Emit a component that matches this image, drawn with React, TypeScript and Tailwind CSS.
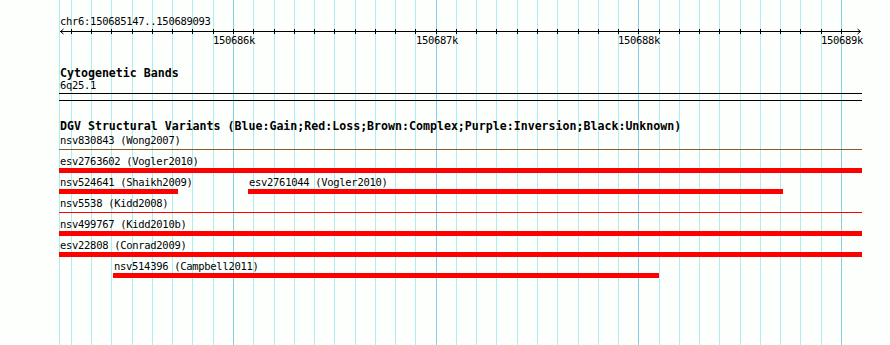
import React from "react";

// scale: 100bp per minor tick, major every 1000bp
const ORIGIN = 233; // x of 150686k
const STEP = 20.267;
const ticks = Array.from({ length: 39 }, (_, i) => i - 8).map((k) => ({
  x: Math.round(ORIGIN + k * STEP),
  major: k % 10 === 0,
  label: k % 10 === 0 ? `${150686 + k / 10}k` : "",
}));

type Feature = { x: number; w: number; label: string; line?: string };

const rows: Feature[][] = [
  [{ x: 59, w: 803, label: "nsv830843 (Wong2007)", line: "#8b5a2b" }],
  [{ x: 59, w: 803, label: "esv2763602 (Vogler2010)" }],
  [
    { x: 59, w: 119, label: "nsv524641 (Shaikh2009)" },
    { x: 248, w: 535, label: "esv2761044 (Vogler2010)" },
  ],
  [{ x: 59, w: 803, label: "nsv5538 (Kidd2008)", line: "#ff0000" }],
  [{ x: 59, w: 803, label: "nsv499767 (Kidd2010b)" }],
  [{ x: 59, w: 803, label: "esv22808 (Conrad2009)" }],
  [{ x: 113, w: 546, label: "nsv514396 (Campbell2011)" }],
];

const small = "text-[10.5px] tracking-[-0.3px] leading-[11px] whitespace-nowrap";
const bold = "text-[11.6px] leading-[12px] font-bold whitespace-nowrap";

function Grid() {
  return (
    <svg className="absolute inset-0" width={890} height={345} shapeRendering="crispEdges">
      <rect x={59} y={0} width={1} height={345} fill="#aeeeee" />
      {ticks.map((t) => (
        <rect key={t.x} x={t.x} y={0} width={1} height={345} fill={t.major ? "#87ceeb" : "#aeeeee"} />
      ))}
    </svg>
  );
}

function Ruler() {
  return (
    <svg width={890} height={8} className="block" shapeRendering="crispEdges">
      <rect x={60} y={4} width={801} height={1} fill="#000" />
      {ticks.map((t) => (
        <rect key={t.x} x={t.x} y={2} width={1} height={5} fill="#000" />
      ))}
      <path d="M63.5 2 L60.5 4.5 L63.5 7" stroke="#000" fill="none" shapeRendering="auto" />
      <path d="M857.5 2 L860.5 4.5 L857.5 7" stroke="#000" fill="none" shapeRendering="auto" />
    </svg>
  );
}

function Track({ features }: { features: Feature[] }) {
  return (
    <div className="relative h-[21px]">
      {features.map((f) => (
        <div key={f.label} className="absolute top-0 flex flex-col" style={{ left: f.x, width: f.w }}>
          <div className={`${small} pl-px`}>{f.label}</div>
          <div className="mt-px h-[5px] flex items-center">
            {f.line ? (
              <div className="h-px w-full" style={{ background: f.line }} />
            ) : (
              <div className="h-[5px] w-full bg-[#ff0000]" />
            )}
          </div>
        </div>
      ))}
    </div>
  );
}

export default function App() {
  return (
    <div
      className="relative w-[890px] h-[345px] overflow-hidden bg-[#fdfffd] text-black"
      style={{ fontFamily: '"DejaVu Sans Mono", "Liberation Mono", monospace' }}
    >
      <Grid />
      <div className="relative">
        <div className={`${small} pt-[16px] pl-[60px]`}>chr6:150685147..150689093</div>
        <Ruler />
        <div className="relative h-[11px]">
          {ticks
            .filter((t) => t.major)
            .map((t) => (
              <span key={t.x} className={`${small} absolute top-0 -translate-x-1/2`} style={{ left: t.x + 1 }}>
                {t.label}
              </span>
            ))}
        </div>

        <div className="pl-[60px]">
          <div className={`${bold} mt-[21px]`}>Cytogenetic Bands</div>
          <div className={`${small} mt-px`}>6q25.1</div>
        </div>
        <div className="ml-[59px] w-[803px] mt-[2px] h-px bg-black" />
        <div className="ml-[59px] w-[803px] mt-[6px] h-px bg-black" />

        <div className={`${bold} pl-[60px] mt-[19px]`}>
          DGV Structural Variants (Blue:Gain;Red:Loss;Brown:Complex;Purple:Inversion;Black:Unknown)
        </div>
        <div className="mt-[3px]">
          {rows.map((r, i) => (
            <Track key={i} features={r} />
          ))}
        </div>
      </div>
    </div>
  );
}
